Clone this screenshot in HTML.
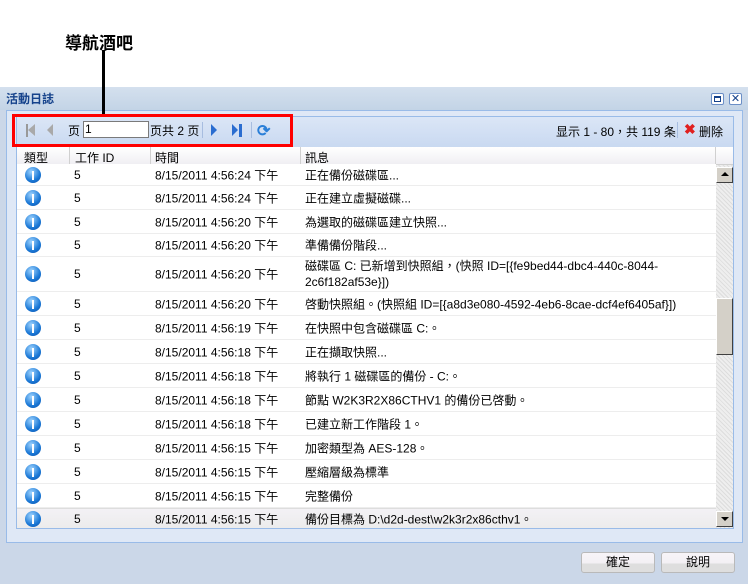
<!DOCTYPE html>
<html><head><meta charset="utf-8"><style>
*{margin:0;padding:0;box-sizing:border-box}
body{width:748px;height:584px;position:relative;background:#fff;font-family:"Liberation Sans","Noto Sans CJK TC",sans-serif;font-size:12px;color:#000;overflow:hidden}
.a{position:absolute}
.row{position:absolute;left:17px;width:699px;border-bottom:1px solid #ededed;background:#fff}
.row span{position:absolute;top:50%;transform:translateY(-50%);white-space:nowrap}
.ic{position:absolute;left:8px;top:50%;margin-top:-8px;width:16px;height:16px;border-radius:50%;background:radial-gradient(circle at 40% 30%,#9fd4ff,#1a78d6 60%,#0b4fa8);}
.ic:after{content:"";position:absolute;left:7px;top:4px;width:2px;height:9px;background:#fff}
.btn{position:absolute;top:552px;height:21px;border:1px solid #b9b9b9;border-radius:3px;background:linear-gradient(#f7f4f8 0,#f3f0f4 55%,#dedede 56%,#dedede);text-align:center;line-height:19px;font-size:12px}
</style></head><body>
<div class="a" style="left:65px;top:29px;font-size:17px;font-weight:bold">導航酒吧</div>
<div class="a" style="left:102px;top:50px;width:3px;height:64px;background:#000;z-index:3"></div>
<div class="a" style="left:0;top:87px;width:748px;height:497px;background:#cbd7e8"></div>
<div class="a" style="left:0;top:87px;width:748px;height:23px;background:linear-gradient(#d4e0ee,#c3d4e6)"></div>
<div class="a" style="left:6px;top:90px;font-size:12px;font-weight:bold;color:#15428b">活動日誌</div>
<div class="a" style="left:711px;top:93px;width:13px;height:12px;border:1px solid #6b8fc6;background:#fff;border-radius:2px"><div style="margin:2px;height:6px;border:1px solid #15428b;border-top-width:2px"></div></div>
<div class="a" style="left:729px;top:93px;width:13px;height:12px;border:1px solid #6b8fc6;background:#fff;border-radius:2px;font-size:11px;line-height:10px;text-align:center;color:#15428b">✕</div>
<div class="a" style="left:6px;top:110px;width:737px;height:433px;background:#dfe8f6;border:1px solid #99bbe8"></div>
<div class="a" style="left:16px;top:116px;width:718px;height:413px;border:1px solid #99bbe8;background:#fff"></div>
<div class="a" style="left:17px;top:117px;width:716px;height:30px;background:linear-gradient(#dbe6f6,#c9d9f1)"></div>
<div class="a" style="left:12px;top:114px;width:281px;height:33px;border:3px solid #f00;z-index:2"></div>
<div class="a" style="left:26px;top:124px;width:2px;height:13px;background:#999"></div>
<div class="a" style="left:28px;top:124px;width:0;height:0;border:6px solid transparent;border-right:7px solid #a9a9a9;border-left:0"></div>
<div class="a" style="left:47px;top:124px;width:0;height:0;border:6px solid transparent;border-right:6px solid #a9a9a9;border-left:0"></div>
<div class="a" style="left:68px;top:122px">页</div>
<div class="a" style="left:83px;top:121px;width:66px;height:17px;border:1px solid #7a7a7a;background:#fff;padding-left:1px;line-height:15px">1</div>
<div class="a" style="left:150px;top:122px">页共 2 页</div>
<div class="a" style="left:202px;top:122px;width:1px;height:16px;background:#a7bde0"></div>
<div class="a" style="left:211px;top:124px;width:0;height:0;border:6px solid transparent;border-left:6px solid #2a6dd0;border-right:0"></div>
<div class="a" style="left:232px;top:124px;width:0;height:0;border:6px solid transparent;border-left:6px solid #2a6dd0;border-right:0"></div>
<div class="a" style="left:239px;top:124px;width:3px;height:13px;background:#2a6dd0"></div>
<div class="a" style="left:251px;top:122px;width:1px;height:16px;background:#a7bde0"></div>
<div class="a" style="left:257px;top:121px;font-size:16px;color:#2a7fd8;font-weight:bold">⟳</div>
<div class="a" style="left:556px;top:123px">显示 1 - 80，共 119 条</div>
<div class="a" style="left:677px;top:122px;width:1px;height:16px;background:#a7bde0"></div>
<div class="a" style="left:684px;top:121px;color:#e02020;font-weight:bold;font-size:14px">✖</div>
<div class="a" style="left:699px;top:123px">删除</div>
<div class="a" style="left:17px;top:147px;width:716px;height:18px;background:linear-gradient(#fff,#f0eff3);border-bottom:1px solid #d0d0d0"></div>
<div class="a" style="left:69px;top:147px;width:1px;height:17px;background:#d0d0d0"></div>
<div class="a" style="left:150px;top:147px;width:1px;height:17px;background:#d0d0d0"></div>
<div class="a" style="left:300px;top:147px;width:1px;height:17px;background:#d0d0d0"></div>
<div class="a" style="left:715px;top:147px;width:1px;height:17px;background:#d0d0d0"></div>
<div class="a" style="left:24px;top:149px">類型</div>
<div class="a" style="left:75px;top:149px">工作 ID</div>
<div class="a" style="left:155px;top:149px">時間</div>
<div class="a" style="left:305px;top:149px">訊息</div>

<div class="row" style="top:164px;height:22px"><i class="ic"></i><span style="left:57px">5</span><span style="left:138px">8/15/2011 4:56:24 下午</span><span style="left:288px">正在備份磁碟區...</span></div>
<div class="row" style="top:186px;height:24px"><i class="ic"></i><span style="left:57px">5</span><span style="left:138px">8/15/2011 4:56:24 下午</span><span style="left:288px">正在建立虛擬磁碟...</span></div>
<div class="row" style="top:210px;height:24px"><i class="ic"></i><span style="left:57px">5</span><span style="left:138px">8/15/2011 4:56:20 下午</span><span style="left:288px">為選取的磁碟區建立快照...</span></div>
<div class="row" style="top:234px;height:23px"><i class="ic"></i><span style="left:57px">5</span><span style="left:138px">8/15/2011 4:56:20 下午</span><span style="left:288px">準備備份階段...</span></div>
<div class="row" style="top:257px;height:35px"><i class="ic"></i><span style="left:57px">5</span><span style="left:138px">8/15/2011 4:56:20 下午</span><span style="left:288px;line-height:16px">磁碟區 C: 已新增到快照組，(快照 ID=[{fe9bed44-dbc4-440c-8044-<br>2c6f182af53e}])</span></div>
<div class="row" style="top:292px;height:24px"><i class="ic"></i><span style="left:57px">5</span><span style="left:138px">8/15/2011 4:56:20 下午</span><span style="left:288px">啓動快照組。(快照組 ID=[{a8d3e080-4592-4eb6-8cae-dcf4ef6405af}])</span></div>
<div class="row" style="top:316px;height:24px"><i class="ic"></i><span style="left:57px">5</span><span style="left:138px">8/15/2011 4:56:19 下午</span><span style="left:288px">在快照中包含磁碟區 C:。</span></div>
<div class="row" style="top:340px;height:24px"><i class="ic"></i><span style="left:57px">5</span><span style="left:138px">8/15/2011 4:56:18 下午</span><span style="left:288px">正在擷取快照...</span></div>
<div class="row" style="top:364px;height:24px"><i class="ic"></i><span style="left:57px">5</span><span style="left:138px">8/15/2011 4:56:18 下午</span><span style="left:288px">將執行 1 磁碟區的備份 - C:。</span></div>
<div class="row" style="top:388px;height:24px"><i class="ic"></i><span style="left:57px">5</span><span style="left:138px">8/15/2011 4:56:18 下午</span><span style="left:288px">節點 W2K3R2X86CTHV1 的備份已啓動。</span></div>
<div class="row" style="top:412px;height:24px"><i class="ic"></i><span style="left:57px">5</span><span style="left:138px">8/15/2011 4:56:18 下午</span><span style="left:288px">已建立新工作階段 1。</span></div>
<div class="row" style="top:436px;height:24px"><i class="ic"></i><span style="left:57px">5</span><span style="left:138px">8/15/2011 4:56:15 下午</span><span style="left:288px">加密類型為 AES-128。</span></div>
<div class="row" style="top:460px;height:24px"><i class="ic"></i><span style="left:57px">5</span><span style="left:138px">8/15/2011 4:56:15 下午</span><span style="left:288px">壓縮層級為標準</span></div>
<div class="row" style="top:484px;height:24px"><i class="ic"></i><span style="left:57px">5</span><span style="left:138px">8/15/2011 4:56:15 下午</span><span style="left:288px">完整備份</span></div>
<div class="row" style="top:508px;height:20px;background:linear-gradient(#f3f1f5,#ececec);border-top:1px solid #ddd;border-bottom:0"><i class="ic"></i><span style="left:57px">5</span><span style="left:138px">8/15/2011 4:56:15 下午</span><span style="left:288px">備份目標為 D:\d2d-dest\w2k3r2x86cthv1。</span></div>

<div class="a" style="left:716px;top:165px;width:17px;height:363px;background-color:#eee;background-image:repeating-linear-gradient(45deg,#ddd 0 1px,transparent 1px 3px)"></div>
<div class="a" style="left:716px;top:167px;width:17px;height:16px;background:#d4d0c8;border:1px solid;border-color:#fff #404040 #404040 #fff"><div style="margin:4px auto 0;width:0;height:0;border:4px solid transparent;border-bottom:4px solid #000;border-top:0"></div></div>
<div class="a" style="left:716px;top:298px;width:17px;height:57px;background:#d4d0c8;border:1px solid;border-color:#fff #404040 #404040 #fff"></div>
<div class="a" style="left:716px;top:511px;width:17px;height:16px;background:#d4d0c8;border:1px solid;border-color:#fff #404040 #404040 #fff"><div style="margin:5px auto 0;width:0;height:0;border:4px solid transparent;border-top:4px solid #000;border-bottom:0"></div></div>

<div class="btn" style="left:581px;width:74px">確定</div>
<div class="btn" style="left:661px;width:74px">說明</div>
</body></html>
